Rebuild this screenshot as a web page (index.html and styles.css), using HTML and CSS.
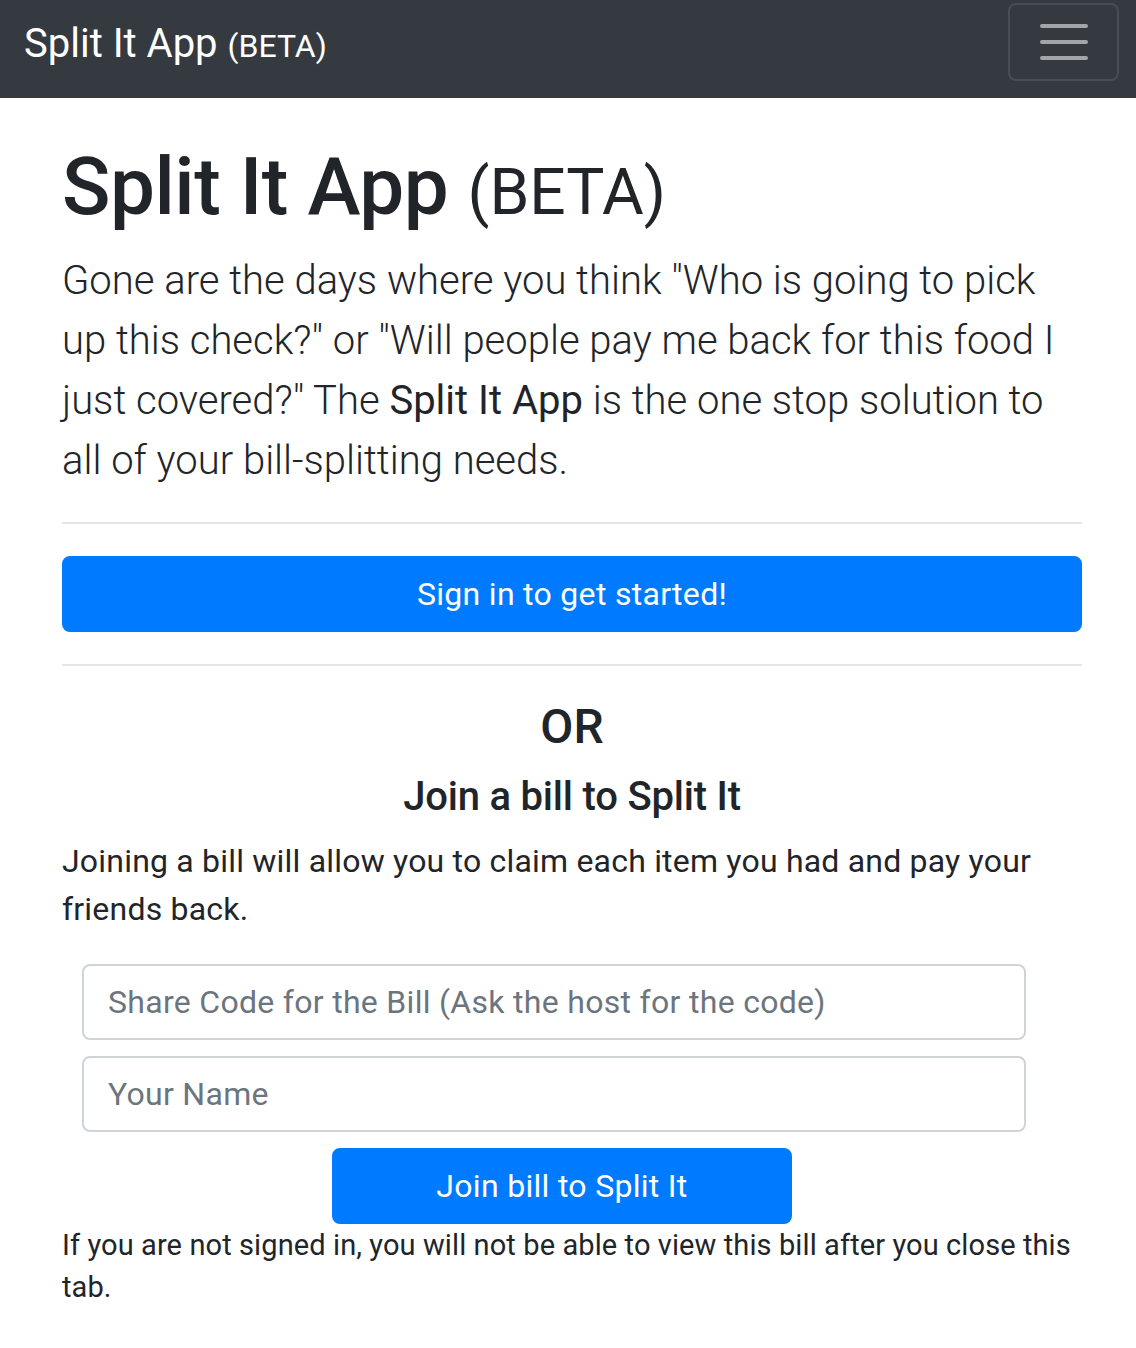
FILE: index.html
```html
<!DOCTYPE html>
<html lang="en">
<head>
    <meta charset="UTF-8">
    <meta name="viewport" content="width=device-width, initial-scale=1.0">
    <title>Split It App (BETA)</title>
    <link rel="stylesheet" href="styles.css">
</head>
<body>
    <nav class="navbar">
        <a class="brand" href="#">Split It App <small>(BETA)</small></a>
        <button class="toggler" type="button" aria-label="Toggle navigation">
            <svg width="48" height="36" viewBox="0 0 48 36">
                <path d="M2 2h44M2 18h44M2 34h44" stroke="rgba(255,255,255,0.55)" stroke-width="4" stroke-linecap="round"/>
            </svg>
        </button>
    </nav>

    <div class="container">
        <h1>Split It App <small>(BETA)</small></h1>
        <p class="lead">Gone are the days where you think "Who is going to pick up this check?" or "Will people pay me back for this food I just covered?" The <strong>Split It App</strong> is the one stop solution to all of your bill-splitting needs.</p>
        <hr>
        <button class="btn btn-block" type="button">Sign in to get started!</button>
        <hr class="hr-bottom">

        <h4 class="or">OR</h4>
        <h5 class="join-title">Join a bill to Split It</h5>
        <p class="join-text">Joining a bill will allow you to claim each item you had and pay your friends back.</p>

        <form class="join-form">
            <input type="text" placeholder="Share Code for the Bill (Ask the host for the code)">
            <input type="text" placeholder="Your Name">
            <button class="btn btn-join" type="button">Join bill to Split It</button>
        </form>
        <p class="note">If you are not signed in, you will not be able to view this bill after you close this tab.</p>
    </div>
</body>
</html>
```

FILE: styles.css
```css
body {
    margin: 0;
    font-family: Roboto, Inter, "Liberation Sans", sans-serif;
    color: #212529;
    background: #fff;
}
.navbar {
    height: 98px;
    background: #343a40;
    display: flex;
    justify-content: space-between;
    align-items: flex-start;
    padding: 3px 17px 0 24px;
    box-sizing: border-box;
}
.brand {
    color: #fff;
    font-size: 40px;
    line-height: 60px;
    margin-top: 11px;
    text-decoration: none;
}
.brand small {
    font-size: 32px;
}
.toggler {
    width: 111px;
    height: 78px;
    background: transparent;
    border: 2px solid rgba(255,255,255,0.1);
    border-radius: 8px;
    display: flex;
    align-items: center;
    justify-content: center;
    padding: 0;
}
.container {
    padding: 41px 54px 0 62px;
}
h1 {
    font-size: 80px;
    font-weight: 500;
    line-height: 96px;
    margin: 0 0 10px;
    letter-spacing: -0.5px;
}
h1 small {
    font-size: 64px;
    font-weight: 400;
    letter-spacing: 0;
}
.lead {
    font-size: 40px;
    font-weight: 300;
    line-height: 60px;
    margin: 0 0 31px;
}
.lead strong {
    font-weight: 400;
}
hr {
    border: 0;
    border-top: 2px solid rgba(0,0,0,0.1);
    margin: 0;
}
.btn {
    display: block;
    background: #007bff;
    color: #fff;
    border: 2px solid #007bff;
    border-radius: 8px;
    font-family: inherit;
    font-size: 32px;
    line-height: 48px;
    padding: 12px 24px;
    cursor: pointer;
    letter-spacing: 0.3px;
}
.btn-block {
    width: 100%;
    margin-top: 32px;
}
.hr-bottom {
    margin-top: 32px;
}
.or {
    font-size: 48px;
    font-weight: 500;
    line-height: 58px;
    text-align: center;
    margin: 32px 0 17px;
}
.join-title {
    font-size: 40px;
    font-weight: 500;
    line-height: 48px;
    text-align: center;
    margin: 0 0 16px;
    letter-spacing: -0.2px;
}
.join-text {
    font-size: 32px;
    line-height: 48px;
    margin: 0 0 31px;
    letter-spacing: 0.2px;
}
.join-form {
    display: flex;
    flex-direction: column;
    gap: 16px;
    margin: 0;
}
.join-form input {
    width: 944px;
    height: 76px;
    margin-left: 20px;
    box-sizing: border-box;
    border: 2px solid #ced4da;
    border-radius: 8px;
    padding: 0 24px;
    font-family: inherit;
    font-size: 32px;
    color: #495057;
    letter-spacing: 0.3px;
}
.join-form input::placeholder {
    color: #6c757d;
}
.btn-join {
    width: 460px;
    height: 76px;
    margin-left: 270px;
}
.note {
    font-size: 29px;
    line-height: 42px;
    margin: 0;
    letter-spacing: 0.1px;
}
```
